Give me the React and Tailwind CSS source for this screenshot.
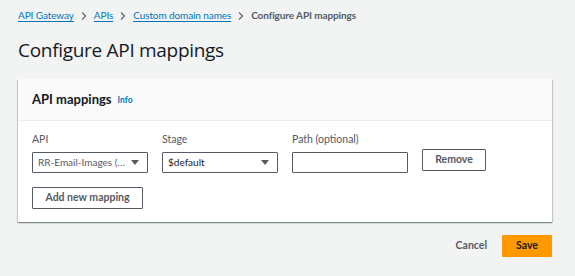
import React from "react";

const Chevron = () => (
  <svg width="8" height="10" viewBox="0 0 8 10" className="mx-[6px] shrink-0">
    <path d="M2 1.5l3.5 3.5-3.5 3.5" fill="none" stroke="#687078" strokeWidth="1.4" />
  </svg>
);

const Caret = () => (
  <svg width="8" height="5" viewBox="0 0 8 5" className="shrink-0">
    <path d="M0 0h8L4 5z" fill="#545b64" />
  </svg>
);

const lato = { fontFamily: 'Lato, "Open Sans", sans-serif' };

export default function App() {
  return (
    <div
      className="w-[575px] h-[276px] bg-[#f2f3f3] text-[#16191f] overflow-hidden"
      style={{ fontFamily: '"Open Sans", "Noto Sans", sans-serif' }}
    >
      <div className="pl-[18px] pr-[23px]">
        <nav className="flex items-center h-[30px] pt-[1px] text-[10px] tracking-[-0.1px] whitespace-nowrap" style={lato}>
          <span className="text-[#0073bb] underline underline-offset-2 decoration-[#0073bb]">API Gateway</span>
          <Chevron />
          <span className="text-[#0073bb] underline underline-offset-2">APIs</span>
          <Chevron />
          <span className="text-[#0073bb] underline underline-offset-2">Custom domain names</span>
          <Chevron />
          <span className="font-bold text-[#545b64]">Configure API mappings</span>
        </nav>
        <h1 className="text-[19px] leading-[24px] mt-[8px] tracking-[-0.3px]">Configure API mappings</h1>
        <div className="mt-[17px] bg-white shadow-[0_1px_1px_0_rgba(0,28,36,0.3),1px_1px_1px_0_rgba(0,28,36,0.15),-1px_1px_1px_0_rgba(0,28,36,0.15)]">
          <div className="h-[42px] bg-[#fafafa] border-b border-[#eaeded] flex items-center pl-[14px]" style={lato}>
            <span className="text-[13px] font-bold">API mappings</span>
            <span className="ml-[6px] text-[8.5px] font-bold text-[#0073bb] mt-[2px]">Info</span>
          </div>
          <div className="pl-[14px] pt-[11px] pb-[13px]" style={lato}>
            <div className="flex items-start">
              <div className="w-[116px]">
                <div className="text-[10.5px] text-[#545b64] h-[14px] leading-[14px]">API</div>
                <div className="mt-[6px] h-[21px] border border-[#545b64] rounded-[1px] flex items-center justify-between pl-[5px] pr-[8px] text-[10px] text-[#545b64] whitespace-nowrap overflow-hidden">
                  <span>RR-Email-Images (…</span>
                  <Caret />
                </div>
              </div>
              <div className="w-[116px] ml-[14px]">
                <div className="text-[10.5px] text-[#545b64] h-[14px] leading-[14px]">Stage</div>
                <div className="mt-[6px] h-[21px] border border-[#545b64] rounded-[1px] flex items-center justify-between pl-[5px] pr-[8px] text-[10px] text-[#16191f] whitespace-nowrap">
                  <span>$default</span>
                  <Caret />
                </div>
              </div>
              <div className="w-[116px] ml-[14px]">
                <div className="text-[10.5px] text-[#545b64] h-[14px] leading-[14px]">Path (optional)</div>
                <div className="mt-[6px] h-[21px] border border-[#545b64] rounded-[1px] bg-white" />
              </div>
              <button className="ml-[14px] mt-[17px] w-[64px] h-[22px] border border-[#545b64] rounded-[1px] text-[10.5px] font-bold text-[#545b64] bg-white">
                Remove
              </button>
            </div>
            <button className="mt-[14px] w-[111px] h-[22px] border border-[#545b64] rounded-[1px] text-[10.5px] font-bold text-[#545b64] bg-white">
              Add new mapping
            </button>
          </div>
        </div>
        <div className="flex justify-end items-center mt-[13px]" style={lato}>
          <span className="text-[10.5px] font-bold text-[#545b64] mr-[15px]">Cancel</span>
          <button className="w-[50px] h-[22px] bg-[#ff9900] rounded-[1px] text-[10.5px] font-bold text-[#16191f]">
            Save
          </button>
        </div>
      </div>
    </div>
  );
}
